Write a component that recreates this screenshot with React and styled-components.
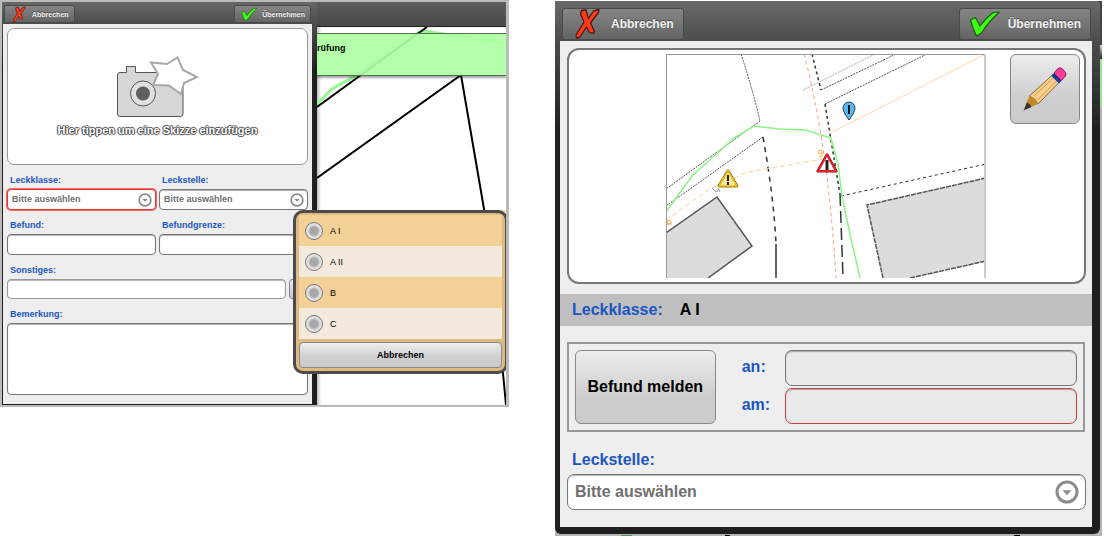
import React, { useState } from "react";
import styled, { createGlobalStyle, css } from "styled-components";

const GlobalStyle = createGlobalStyle`
  * {
    box-sizing: border-box;
  }

  body {
    margin: 0;
    background: #fff;
    font-family: "Liberation Sans", Arial, sans-serif;
  }

  button,
  input,
  select,
  textarea {
    font-family: inherit;
    margin: 0;
  }
`;

const LEAK_CLASSES = ["A I", "A II", "B", "C"];

export default function App() {
  return (
    <>
      <GlobalStyle />
      <Page>
        <InspectionScreen />
        <ReportScreen />
      </Page>
    </>
  );
}

function InspectionScreen() {
  const [leakClass, setLeakClass] = useState("");

  return (
    <SmallScreen>
      <SmallPanel>
        <Toolbar $small>
          <ToolbarButton $small type="button">
            <CrossIcon size={17} />
            Abbrechen
          </ToolbarButton>
          <ToolbarButton $small type="button">
            <CheckIcon size={17} />
            Übernehmen
          </ToolbarButton>
        </Toolbar>
        <SmallBody>
          <SketchButton type="button">
            <CameraIcon />
            <SketchHint>Hier tippen um eine Skizze einzufügen</SketchHint>
          </SketchButton>
          <FieldGrid>
            <Field>
              <Label $small htmlFor="leckklasse">Leckklasse:</Label>
              <Dropdown id="leckklasse" small invalid />
            </Field>
            <Field>
              <Label $small htmlFor="leckstelle">Leckstelle:</Label>
              <Dropdown id="leckstelle" small />
            </Field>
            <Field>
              <Label $small htmlFor="befund">Befund:</Label>
              <TextInput $small id="befund" />
            </Field>
            <Field>
              <Label $small htmlFor="befundgrenze">Befundgrenze:</Label>
              <TextInput $small id="befundgrenze" />
            </Field>
          </FieldGrid>
          <Field>
            <Label $small htmlFor="sonstiges">Sonstiges:</Label>
            <InputRow>
              <TextInput $small id="sonstiges" />
              <MoreButton type="button" aria-label="Sonstiges" />
            </InputRow>
          </Field>
          <Field>
            <Label $small htmlFor="bemerkung">Bemerkung:</Label>
            <TextArea id="bemerkung" />
          </Field>
        </SmallBody>
      </SmallPanel>
      <MapSide>
        <MapHeader />
        <MapArea>
          <MapLines />
          <Banner>rüfung</Banner>
        </MapArea>
      </MapSide>
      <Popup>
        {LEAK_CLASSES.map((name) => (
          <Choice key={name}>
            <Radio
              name="klasse"
              value={name}
              checked={leakClass === name}
              onChange={() => setLeakClass(name)}
            />
            {name}
          </Choice>
        ))}
        <PopupButton type="button">Abbrechen</PopupButton>
      </Popup>
    </SmallScreen>
  );
}

function ReportScreen() {
  return (
    <LargeScreen>
      <LargePanel>
        <Toolbar>
          <ToolbarButton type="button">
            <CrossIcon size={32} />
            Abbrechen
          </ToolbarButton>
          <ToolbarButton type="button">
            <CheckIcon size={32} />
            Übernehmen
          </ToolbarButton>
        </Toolbar>
        <LargeBody>
          <Preview>
            <SketchMap />
            <EditButton type="button" aria-label="Skizze bearbeiten">
              <PencilIcon />
            </EditButton>
          </Preview>
          <SummaryBar>
            <Label as="span">Leckklasse:</Label>
            <SummaryValue>A I</SummaryValue>
          </SummaryBar>
          <ReportBox>
            <ReportButton type="button">Befund melden</ReportButton>
            <ReportFields>
              <Label htmlFor="an">an:</Label>
              <TextInput id="an" $muted />
              <Label htmlFor="am">am:</Label>
              <TextInput id="am" $muted $invalid />
            </ReportFields>
          </ReportBox>
          <LargeField>
            <Label htmlFor="stelle">Leckstelle:</Label>
            <Dropdown id="stelle" />
          </LargeField>
        </LargeBody>
      </LargePanel>
    </LargeScreen>
  );
}

function Dropdown({ id, small, invalid }) {
  return (
    <DropdownBox $small={small} $invalid={invalid}>
      <Select id={id} $small={small}>
        <option>Bitte auswählen</option>
      </Select>
      <DropdownIcon size={small ? 14 : 24} />
    </DropdownBox>
  );
}

/* Icons */

function CrossIcon({ size }) {
  return (
    <svg width={size} height={size} viewBox="0 0 32 32" aria-hidden="true">
      <path
        d="M9.500 2.500 L14 2 L16.500 10.500 L21.500 3 L27 1.500 L26.500 4.500 L18.500 15 L22.500 23.500 L21 25.500 L17 24 L14.500 19 L7.500 29.500 L4.500 30 L4 27 L12 14 L8.500 6 Z"
        fill="#ff3a1c"
        stroke="#4a1a10"
        strokeWidth="1.300"
        strokeLinejoin="round"
      />
    </svg>
  );
}

function CheckIcon({ size }) {
  return (
    <svg width={size} height={size} viewBox="0 0 32 32" aria-hidden="true">
      <path
        d="M1.500 12 L6.500 9.500 L11 18 Q17 10 24 4.500 L30.500 4 Q20 13 12.500 25 L7.500 28 Q3.500 20 1.500 12 Z"
        fill="#3cff14"
        stroke="#1d5a10"
        strokeWidth="1.200"
        strokeLinejoin="round"
      />
    </svg>
  );
}

function DropdownIcon({ size }) {
  return (
    <svg width={size} height={size} viewBox="0 0 24 24" aria-hidden="true">
      <circle cx="12" cy="12" r="10" fill="#fff" stroke="#8c8c8c" strokeWidth="3" />
      <path d="M7.500 10.300 H16.500 L12 15.200 Z" fill="#8c8c8c" />
    </svg>
  );
}

function CameraIcon() {
  return (
    <svg width="82" height="62" viewBox="0 0 82 62" aria-hidden="true">
      <path
        d="M3 16.500 H9.500 V10.500 H18.500 V16.500 H64 Q66 16.500 66 18.500 V58 Q66 60.500 63.500 60.500 H3 Q.500 60.500 .500 58 V19 Q.500 16.500 3 16.500 Z"
        fill="#d7d7d7"
        stroke="#555"
      />
      <circle cx="26" cy="37.500" r="12.500" fill="#e0e0e0" stroke="#555" />
      <circle cx="26" cy="37.500" r="7" fill="#5e5e5e" />
      <path
        d="M34 6.500 L50 8 L60.500 1.500 L66 14 L80 21 L67 27 L64 38 L52 29.500 L36 29 L41 18 Z"
        fill="#fff"
        stroke="#a8a8a8"
        strokeWidth="2"
      />
    </svg>
  );
}

function PencilIcon() {
  return (
    <svg width="46" height="46" viewBox="0 0 46 46" aria-hidden="true">
      <path d="M7.500 30 L31 8.500 L38 15.500 L16 38 Q14 33 7.500 30 Z" fill="#f9cf8c" stroke="#8a6434" strokeWidth="1" />
      <path d="M12 30 L32 11.500 M16 33.500 L35 14.500" stroke="#d39a50" fill="none" />
      <path d="M7.500 30 Q14 31 16 38 L5.500 42.500 L3 40 Z" fill="#c48a2a" />
      <path d="M5 36.500 Q8 37.500 9.500 41 L1.500 44.500 Z" fill="#333" />
      <path d="M29.500 10 L32 7 L39.500 14.500 L37 17.500 Z" fill="#1437a0" />
      <path d="M32 7 L36 2.500 Q38 1 40.500 3 L43.500 6.500 Q44.500 9 43 10.500 L39.500 14.500 Z" fill="#ff3c9c" stroke="#802050" />
    </svg>
  );
}

function MapLines() {
  return (
    <MapSvg viewBox="0 0 189 378" preserveAspectRatio="xMinYMin slice" aria-hidden="true">
      <path d="M0 77 L15 62 L33 52 L104 4 L113 5 L189 16" fill="none" stroke="#96f78e" strokeWidth="3" />
      <path d="M0 80 L110 0 M0 151 L144 48 L167 182 L186 346 L189 378" fill="none" stroke="#000" strokeWidth="2" />
      <path d="M170 184 H189" stroke="#f3a94a" />
    </MapSvg>
  );
}

function SketchMap() {
  return (
    <svg width="320" height="224" viewBox="0 0 320 224" role="img" aria-label="Skizze">
      <rect width="320" height="224" fill="#fff" />
      <g fill="#dcdcdc" stroke="#555" strokeWidth="1.500">
        <path d="M0 179 L51 143 L86 192 L42 224 H0 Z" stroke="none" />
        <path d="M0 179 L51 143 L86 192 L42 224" />
        <path d="M320 124 L201 151 L217 224 H244 L320 207 Z" stroke="none" />
        <path d="M320 124 L201 151 L217 224 M244 224 L320 207" fill="none" strokeDasharray="5 1" />
      </g>
      <g fill="none" stroke="#555" strokeDasharray="2 1">
        <path d="M75 0 Q88 40 94 67 L0 135" />
        <path d="M0 152 L97 83" />
        <path d="M155 36 L230 0" />
        <path d="M159 50 L261 0" />
        <path d="M137 36 L209 0" stroke="#aaa" />
      </g>
      <g fill="none" stroke="#333" strokeWidth="1.500">
        <path d="M97 83 Q108 145 110 190" strokeDasharray="5 5" />
        <path d="M110 190 V224" />
        <path d="M146 0 L155 36 M159 50 L174 140" strokeDasharray="3 3" />
        <path d="M174 140 L177 224" strokeDasharray="12 5" />
        <path d="M175 142 L320 110" strokeDasharray="3 3" strokeWidth="1" />
      </g>
      <path d="M138 0 Q162 90 170 224" fill="none" stroke="#ff9d88" strokeDasharray="4 3" />
      <path d="M0 166 L45 134 L82 118 L157 105" fill="none" stroke="#fbd19a" strokeDasharray="5 3" />
      <path d="M160 77 H168 L320 0" fill="none" stroke="#fbd9a8" />
      <path d="M0 158 L26 122 L68 84 L88 72 L113 75 L139 76 L165 84 L172 110 L176 142 L184 180 L194 224" fill="none" stroke="#8af582" strokeWidth="1.500" />
      <g fill="none" stroke="#f3b04c">
        <circle cx="154" cy="98" r="2" />
        <circle cx="3" cy="168" r="2" />
        <path d="M156 98 V102 L153 103 M1 170 H6" />
      </g>
      <path d="M46 134 L50 138 M49 137 Q52 139 53 135 M52 134 L54 138" stroke="#999" fill="none" />
      <path d="M62 117 L71 132 H53 Z" fill="#fff" stroke="#9a7710" strokeWidth="3" strokeLinejoin="round" />
      <path d="M62 117 L71 132 H53 Z" fill="#f7e9a0" stroke="#eab81a" strokeWidth="1.500" />
      <path d="M62 121 V127 M62 128 V131" stroke="#222" strokeWidth="2" />
      <path d="M161 101 L170 117 H152 Z" fill="#fff" stroke="#7a0c10" strokeWidth="3" strokeLinejoin="round" />
      <path d="M161 101 L170 117 H152 Z" fill="#fff" stroke="#e6202a" strokeWidth="2" />
      <path d="M161 106 V116" stroke="#222" strokeWidth="3" />
      <path d="M183 66 Q177 58 177 54 A6 6 0 0 1 189 54 Q189 58 183 66 Z" fill="#55baf0" stroke="#335" />
      <path d="M183 51 V60" stroke="#111" strokeWidth="2" />
      <path d="M.500 224 V.500 H319.500" fill="none" stroke="#999" />
      <path d="M319 0 V224" stroke="#ccc" strokeWidth="2" />
    </svg>
  );
}

/* Page */

const Page = styled.main`
  display: grid;
  grid-template-columns: 509fr 547fr;
  column-gap: 46px;
  align-items: start;
  padding-right: 2px;
`;

const SmallScreen = styled.section`
  position: relative;
  display: grid;
  grid-template-columns: 315fr 189fr;
  border: 2px solid #bbb;
  border-right-width: 3px;
  overflow: hidden;
`;

const LargeScreen = styled.section`
  margin-top: 1px;
  padding: 0 2px 2px 0;
  background:
    linear-gradient(90deg, transparent 12%, #4a9a4a 12%, #4a9a4a 14%, transparent 14%, transparent 31%, #000 31%, #000 32%, transparent 32%, transparent 84%, #000 84%, #000 85%, transparent 85%)
      bottom / 100% 1px no-repeat,
    linear-gradient(#444 44px, #ddd 44px, #222 58px, #98e893 58px, #98e893 106px, #b5b5b5 106px);
`;

/* Panels */

const panel = css`
  display: flex;
  flex-direction: column;
`;

const SmallPanel = styled.div`
  ${panel}
  padding: 0 5px 1px 1px;
  background: linear-gradient(#686868, #4c4c4c 22px, #1f1f1f 70px);
`;

const LargePanel = styled.div`
  ${panel}
  padding: 0 8px 7px 5px;
  border-radius: 0 4px 6px 6px;
  background: linear-gradient(#6a6a6a, #4c4c4c 40px, #1f1f1f 130px);
`;

const Toolbar = styled.header`
  display: flex;
  justify-content: space-between;
  align-items: flex-end;
  height: ${({ $small }) => ($small ? 22 : 40)}px;
  padding: ${({ $small }) => ($small ? "0 1px 1px" : "0 1px 1px 2px")};
`;

const ToolbarButton = styled.button`
  display: flex;
  align-items: center;
  gap: ${({ $small }) => ($small ? 4 : 7)}px;
  height: ${({ $small }) => ($small ? 18 : 32)}px;
  padding: ${({ $small }) => ($small ? "0 5px 0 6px" : "0 9px 0 9px")};
  border: 1px solid #4a4a4a;
  border-radius: ${({ $small }) => ($small ? 2 : 3)}px;
  background: linear-gradient(#868686, #646464);
  color: #f2f2f2;
  font-size: ${({ $small }) => ($small ? 7 : 12)}px;
  font-weight: bold;
  text-shadow: 0 -1px 0 rgba(0, 0, 0, 0.4);
`;

const SmallBody = styled.div`
  display: flex;
  flex-direction: column;
  gap: 8px;
  padding: 4px 4px 9px;
  background: #eee;
`;

const LargeBody = styled.div`
  padding: 7px 0 17px;
  background: #eee;
`;

/* Form parts */

const Field = styled.div`
  display: flex;
  flex-direction: column;
  min-width: 0;
`;

const FieldGrid = styled.div`
  display: grid;
  grid-template-columns: 1fr 1fr;
  gap: 8px 3px;
`;

const LargeField = styled(Field)`
  padding: 16px 6px 0 7px;
`;

const Label = styled.label`
  padding: ${({ $small }) => ($small ? "0 0 2px 3px" : "0 0 2px 5px")};
  color: #1c55c4;
  font-size: ${({ $small }) => ($small ? 9 : 16)}px;
  font-weight: bold;
  line-height: ${({ $small }) => ($small ? 14 : 24)}px;
`;

const fieldBox = css`
  width: 100%;
  min-width: 0;
  height: ${({ $small }) => ($small ? 21 : 36)}px;
  border: 1px solid #777;
  border-radius: ${({ $small }) => ($small ? 4 : 7)}px;
  background: #fff;
  box-shadow: inset 0 1px 1px rgba(0, 0, 0, 0.3);
`;

const TextInput = styled.input`
  ${fieldBox}
  padding: 0 4px;
  font-size: ${({ $small }) => ($small ? 9 : 16)}px;
  ${({ $muted }) => $muted && "background: #eaeaea;"}
  ${({ $invalid }) => $invalid && "border-color: #cc4040;"}
`;

const TextArea = styled.textarea`
  ${fieldBox}
  display: block;
  height: 72px;
  border-radius: 4px;
  resize: none;
`;

const DropdownBox = styled.div`
  ${fieldBox}
  display: flex;
  align-items: center;
  padding-right: ${({ $small }) => ($small ? 3 : 6)}px;
  ${({ $invalid }) =>
    $invalid && "border-color: #e53935; box-shadow: 0 0 0 1px #ee6a66;"}

  svg {
    flex: none;
  }
`;

const Select = styled.select`
  flex: 1;
  min-width: 0;
  padding: ${({ $small }) => ($small ? "0 0 1px 4px" : "0 0 1px 7px")};
  border: 0;
  background: none;
  appearance: none;
  color: #707070;
  font-size: ${({ $small }) => ($small ? 9 : 16)}px;
  font-weight: bold;
`;

const InputRow = styled.div`
  display: grid;
  grid-template-columns: 1fr 19px;
  gap: 3px;

  ${TextInput} {
    height: 20px;
    border-color: #999;
  }
`;

const raised = css`
  border: 1px solid #888;
  background: linear-gradient(#ededed, #cfcfcf 60%, #cbcbcb);
  color: #000;
  font-weight: bold;
`;

const MoreButton = styled.button`
  ${raised}
  border-radius: 3px;
`;

const SketchButton = styled.button`
  display: flex;
  flex-direction: column;
  align-items: center;
  gap: 4px;
  height: 137px;
  padding: 27px 0 0;
  border: 1px solid #999;
  border-radius: 7px;
  background: #fff;
`;

const SketchHint = styled.span`
  color: #fff;
  font-size: 11px;
  font-weight: bold;
  line-height: 16px;
  text-shadow: 1px 0 1px #444, -1px 0 1px #444, 0 1px 1px #444, 0 -1px 1px #444;
`;

/* Map beside the small panel */

const MapSide = styled.div`
  display: flex;
  flex-direction: column;
  min-width: 0;
`;

const MapHeader = styled.div`
  height: 25px;
  border-bottom: 1px solid #222;
  background: linear-gradient(#5c5c5c, #494949);
`;

const MapArea = styled.div`
  display: grid;
  flex: 1;
  background: #fff;
  box-shadow: inset 3px 0 3px -1px #bbb;
`;

const MapSvg = styled.svg`
  grid-area: 1 / 1;
  width: 100%;
  height: 100%;
`;

const Banner = styled.div`
  grid-area: 1 / 1;
  z-index: 1;
  align-self: start;
  height: 43px;
  margin-top: 6px;
  padding-top: 8px;
  border: solid #556b55;
  border-width: 1px 0;
  background: rgba(172, 255, 163, 0.92);
  box-shadow: 0 2px 2px rgba(0, 0, 0, 0.35);
  font-size: 9px;
  font-weight: bold;
  line-height: 12px;
`;

/* Selection popup */

const Popup = styled.div`
  position: absolute;
  z-index: 2;
  top: 208px;
  right: -2px;
  width: 215px;
  padding: 2px 3px 3px;
  border: 3px solid #4b4b4b;
  border-radius: 10px;
  background: #deb982;
`;

const Choice = styled.label`
  display: flex;
  align-items: center;
  gap: 7px;
  height: 31px;
  padding-left: 6px;
  background: #f3d196;
  font-size: 9px;

  &:nth-child(even) {
    background: #f3eadd;
  }
`;

const Radio = styled.input.attrs({ type: "radio" })`
  width: 18px;
  height: 18px;
  margin: 0;
  appearance: none;
  border: 1px solid #777;
  border-radius: 50%;
  background: radial-gradient(circle, #a8a8a8 4px, #dedede 6px, #eee);

  &:checked {
    background: radial-gradient(circle, #1c55c0 4px, #dedede 6px, #eee);
  }
`;

const PopupButton = styled.button`
  ${raised}
  display: block;
  width: 100%;
  height: 26px;
  margin-top: 3px;
  border-radius: 4px;
  font-size: 9px;
`;

/* Report screen */

const Preview = styled.div`
  display: grid;
  grid-template-columns: 1fr auto 1fr;
  align-items: start;
  height: 236px;
  margin: 0 6px 0 7px;
  padding: 4px 4px 4px 3px;
  border: 2px solid #777;
  border-radius: 12px;
  background: #fff;

  svg {
    grid-column: 2;
  }
`;

const EditButton = styled.button`
  ${raised}
  display: grid;
  place-items: center;
  justify-self: end;
  width: 70px;
  height: 70px;
  padding: 0;
  border-radius: 6px;

  svg {
    grid-column: 1;
  }
`;

const SummaryBar = styled.div`
  display: flex;
  align-items: center;
  gap: 17px;
  height: 32px;
  margin-top: 10px;
  padding-left: 7px;
  background: #bfbfbf;

  ${Label} {
    padding-bottom: 0;
  }
`;

const SummaryValue = styled.span`
  font-size: 16px;
  font-weight: bold;
`;

const ReportBox = styled.div`
  display: grid;
  grid-template-columns: 141fr 336fr;
  gap: 26px;
  margin: 16px 7px 0;
  padding: 6px;
  border: 2px solid #999;
`;

const ReportButton = styled.button`
  ${raised}
  padding: 0;
  border-radius: 6px;
  font-size: 16px;
`;

const ReportFields = styled.div`
  display: grid;
  grid-template-columns: 43px 1fr;
  gap: 2px 0;
  align-items: center;

  ${Label} {
    padding-left: 0;
  }
`;
